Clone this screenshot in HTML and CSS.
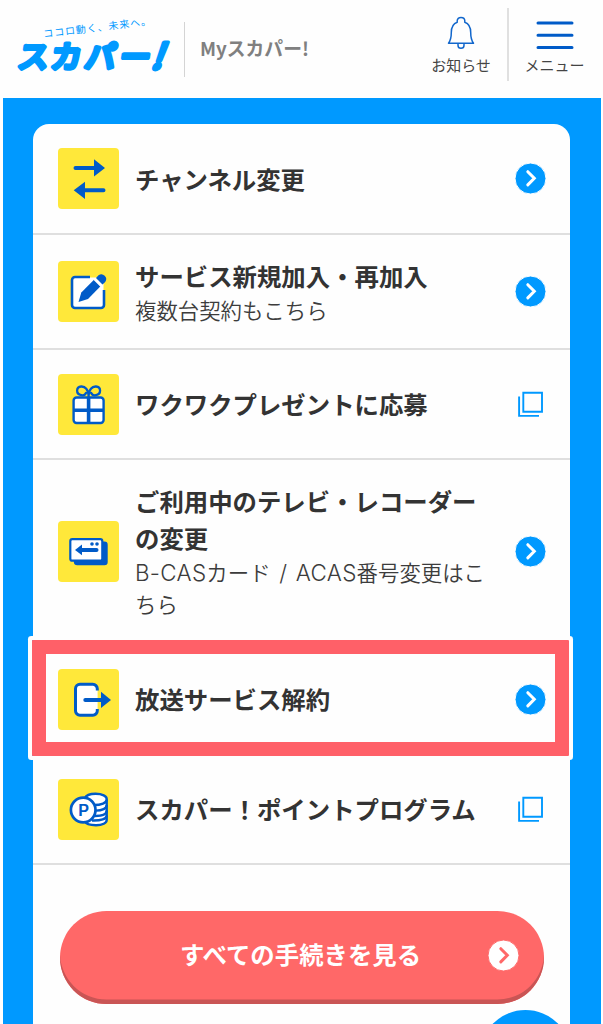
FILE: index.html
```html
<!DOCTYPE html>
<html lang="ja">
<head>
    <meta charset="UTF-8">
    <meta name="viewport" content="width=device-width, initial-scale=1.0">
    <title>Myスカパー!</title>
    <link rel="stylesheet" href="styles.css">
</head>
<body>
    <!-- 共通アイコン -->
    <svg class="defs" width="0" height="0">
        <symbol id="arrow" viewBox="0 0 31 31">
            <circle cx="15.5" cy="15.5" r="15.5" fill="currentColor"/>
            <path class="chevron" d="M12.8 8.7 19.3 15.3 12.8 21.9" fill="none" stroke-width="3" stroke-linecap="round"/>
        </symbol>
        <symbol id="window" viewBox="0 0 26 26">
            <path d="M5.3 1.7H24V20.7H5.3ZM1.1 5.5V24.9H21" fill="none" stroke="#0099ff" stroke-width="1.9"/>
        </symbol>
    </svg>

    <header class="header">
        <svg class="logo" width="184" height="98" viewBox="0 0 184 98">
            <path id="tagline" d="M44 37.5 Q92 32 152 24.5" fill="none"/>
            <text class="tagline"><textPath href="#tagline">ココロ動く、未来へ。</textPath></text>
            <g class="logo-text" transform="translate(0 67.5) skewX(-8)">
                <text x="32 65 99 134">スカパー</text>
            </g>
            <g class="logo-text" transform="translate(156 69) skewX(-20)">
                <text class="logo-mark">!</text>
            </g>
        </svg>
        <div class="site-name">Myスカパー!</div>
        <a class="head-btn news" href="#">
            <svg width="28" height="34" viewBox="0 0 28 34">
                <path d="M1.5 27.3C4.3 23.5 4.3 21 4.3 16.5C4.3 10.5 6.5 7.5 10.2 6.2V5C10.2 2.7 11.8 1.4 14 1.4S17.8 2.7 17.8 5V6.2C21.5 7.5 23.7 10.5 23.7 16.5C23.7 21 23.7 23.5 26.5 27.3ZM11 27.5V29.2C11 31.3 12.3 32.3 14 32.3S17 31.3 17 29.2V27.5" fill="none" stroke="#1267cc" stroke-width="1.5" stroke-linejoin="round"/>
            </svg>
            <span>お知らせ</span>
        </a>
        <a class="head-btn menu" href="#">
            <svg width="38" height="34" viewBox="0 0 38 34">
                <path d="M2 7H36M2 19.2H36M2 31.4H36" stroke="#005bc8" stroke-width="3" stroke-linecap="round"/>
            </svg>
            <span>メニュー</span>
        </a>
    </header>

    <main class="main">
        <div class="card">
            <a class="row" href="#">
                <svg class="icon" viewBox="0 0 61 61">
                    <path d="M17.5 20H38M25 42.2H45.5" stroke="#005bc8" stroke-width="4" stroke-linecap="round"/>
                    <path d="M36 11.2 47 20 36 28.6ZM27 33.8V51L15.7 42.2Z" fill="#005bc8"/>
                </svg>
                <div class="text"><p class="title">チャンネル変更</p></div>
                <svg class="go"><use href="#arrow"/></svg>
            </a>
            <a class="row row-sub" href="#">
                <svg class="icon" viewBox="0 0 61 61">
                    <rect x="14.5" y="16.5" width="31" height="30" rx="2.5" fill="#fff"/>
                    <path d="M32 16H17A3 3 0 0 0 14 19V44A3 3 0 0 0 17 47H43A3 3 0 0 0 46 44V29" fill="none" stroke="#005bc8" stroke-width="2.6"/>
                    <path d="M20.5 41 23.3 31.5 36 18.8 42.5 25.3 30 38Z" fill="#005bc8"/>
                    <path d="M36.3 18 43.5 25.2" stroke="#fff" stroke-width="2.2"/>
                    <path d="M38 17 40.5 14.3A4.8 4.8 0 0 1 47.2 21L44.5 23.5Z" fill="#005bc8"/>
                </svg>
                <div class="text">
                    <p class="title">サービス新規加入・再加入</p>
                    <p class="sub">複数台契約もこちら</p>
                </div>
                <svg class="go"><use href="#arrow"/></svg>
            </a>
            <a class="row row-present" href="#">
                <svg class="icon" viewBox="0 0 61 61">
                    <rect x="15.6" y="23.5" width="30" height="25.5" rx="3" fill="#fff" stroke="#005bc8" stroke-width="2.4"/>
                    <path d="M30.6 23V49M15.6 36.2H45.6" stroke="#005bc8" stroke-width="3.6"/>
                    <path d="M30.6 23C30.5 15 27 12.3 23.2 12.5C18 12.8 17.5 20.2 23.3 21.2C26.5 21.8 27.5 20.2 28 19M30.6 23C30.7 15 34.2 12.3 38 12.5C43.2 12.8 43.7 20.2 37.9 21.2C34.7 21.8 33.7 20.2 33.2 19" fill="none" stroke="#005bc8" stroke-width="2.3" stroke-linecap="round"/>
                </svg>
                <div class="text"><p class="title">ワクワクプレゼントに応募</p></div>
                <svg class="win"><use href="#window"/></svg>
            </a>
            <a class="row row-long" href="#">
                <svg class="icon" viewBox="0 0 61 61">
                    <path d="M44 20.5H46.5A3.2 3.2 0 0 1 49.7 23.7V41A3.2 3.2 0 0 1 46.5 44.2H19.3A3.5 3.5 0 0 1 15.8 41V38Z" fill="#005bc8"/>
                    <rect x="12.3" y="18.2" width="32" height="21.5" rx="2" fill="#fff" stroke="#005bc8" stroke-width="2.2"/>
                    <path d="M22.5 29H38.5" stroke="#005bc8" stroke-width="4" stroke-linecap="round"/>
                    <path d="M24 23.5V34.3L17 29Z" fill="#005bc8"/>
                    <circle cx="34" cy="23" r="1.8" fill="#005bc8"/>
                    <circle cx="39" cy="23" r="1.8" fill="#005bc8"/>
                </svg>
                <div class="text">
                    <p class="title">ご利用中のテレビ・レコーダー<br>の変更</p>
                    <p class="sub"><span class="en">B-CAS</span>カード<span class="en"> / ACAS</span>番号変更はこ<br>ちら</p>
                </div>
                <svg class="go"><use href="#arrow"/></svg>
            </a>
            <a class="row row-cancel" href="#">
                <svg class="icon" viewBox="0 0 61 61">
                    <rect x="17.6" y="15.4" width="22" height="31" rx="4.5" fill="#fff"/>
                    <path d="M39.3 21.5V19.8A4.5 4.5 0 0 0 34.8 15.3H22A4.5 4.5 0 0 0 17.5 19.8V41.7A4.5 4.5 0 0 0 22 46.2H34.8A4.5 4.5 0 0 0 39.3 41.7V40" fill="none" stroke="#005bc8" stroke-width="3"/>
                    <path d="M27.3 31H44" stroke="#005bc8" stroke-width="4" stroke-linecap="round"/>
                    <path d="M43 22.8 53 31 43 39Z" fill="#005bc8"/>
                </svg>
                <div class="text"><p class="title">放送サービス解約</p></div>
                <svg class="go"><use href="#arrow"/></svg>
                <div class="frame"></div>
            </a>
            <a class="row" href="#">
                <svg class="icon" viewBox="0 0 61 61">
                    <g fill="#fff" stroke="#005bc8" stroke-width="2.4">
                        <path d="M26.5 19.5C28 16.5 32 14.8 37.5 14.8C44.5 14.8 48.7 17.2 48.7 20V41C48.7 44 44.5 46.2 38 46.2C32.5 46.2 28 45 26.5 42Z"/>
                        <path d="M48.7 20.5C48.7 24 43 26 36 26M48.7 26C48.7 29.5 44 31.6 38 31.6M48.7 31.5C48.7 35 44 37 37 37M48.7 36.5C48.7 40 43 41.8 34 41.5" fill="none"/>
                        <circle cx="25.2" cy="31" r="12.3" stroke-width="2.7"/>
                    </g>
                    <text class="point" x="20.2" y="36.7">P</text>
                </svg>
                <div class="text"><p class="title">スカパー！ポイントプログラム</p></div>
                <svg class="win"><use href="#window"/></svg>
            </a>
            <a class="all-btn" href="#">
                <span>すべての手続きを見る</span>
                <svg class="go"><use href="#arrow"/></svg>
            </a>
        </div>
    </main>
    <div class="page-top"><a href="#"></a></div>
</body>
</html>
```
FILE: styles.css
```css
* {
    box-sizing: border-box;
}
body {
    margin: 0;
    height: 1024px;
    overflow: hidden;
    position: relative;
    background-color: #fefefe;
    color: #333;
    font-family: "Noto Sans CJK JP", sans-serif;
}
a {
    color: inherit;
    text-decoration: none;
}
p {
    margin: 0;
}
.defs {
    position: absolute;
}

/* ヘッダー */
.header {
    display: flex;
    height: 98px;
}
.logo {
    flex: none;
}
.tagline {
    font-size: 10px;
    letter-spacing: 0.9px;
    fill: #0099ff;
}
.logo-text {
    font-size: 31px;
    font-weight: 500;
    text-anchor: middle;
    fill: #0099ff;
    stroke: #0099ff;
    stroke-width: 4px;
    stroke-linejoin: round;
}
.logo-mark {
    font-size: 35px;
}
.site-name {
    height: 55px;
    margin-top: 22px;
    padding-left: 15px;
    border-left: 1px solid #d4d4d4;
    line-height: 51px;
    font-size: 18.8px;
    font-weight: bold;
    color: #808080;
    white-space: nowrap;
}
.head-btn {
    display: flex;
    flex-direction: column;
    align-items: center;
    font-size: 15px;
    line-height: 20px;
    color: #444;
    white-space: nowrap;
}
.news {
    width: 93px;
    height: 73px;
    margin: 8px 0 0 auto;
    padding: 8px 1px 0 0;
    border-right: 2px solid #e0e0e0;
}
.news span,
.menu span {
    margin-top: 5px;
}
.menu {
    width: 94px;
    padding: 16px 3px 0 0;
}

/* 手続き一覧 */
.main {
    margin: 0 2px 0 3px;
    padding: 26px 31px 0 30px;
    height: 926px;
    background-color: #0099ff;
}
.card {
    height: 900px;
    background-color: #fefefe;
    border-radius: 16px 16px 0 0;
}
.row {
    display: flex;
    align-items: center;
    position: relative;
    height: 110px;
    padding: 0 24px 0 25px;
    border-bottom: 2px solid #dfdfdf;
}
.row:first-child {
    height: 111px;
}
.row-sub {
    height: 115px;
}
.row-long {
    height: 185px;
}
.icon {
    flex: none;
    width: 61px;
    height: 61px;
    background-color: #ffe83a;
    border-radius: 4px;
}
.point {
    font-family: "Liberation Sans", sans-serif;
    font-size: 16px;
    font-weight: bold;
    fill: #005bc8;
}
.text {
    flex: 1;
    padding: 0 0 1px 16px;
    white-space: nowrap;
}
.title {
    font-size: 24.4px;
    font-weight: bold;
    line-height: 37px;
}
.sub {
    font-size: 21.4px;
    font-weight: 350;
    line-height: 32px;
    color: #3c3c3c;
}
.en {
    font-family: Inter, sans-serif;
    font-size: 22.4px;
    line-height: 1;
    letter-spacing: 0.3px;
    word-spacing: 2px;
}
.go {
    flex: none;
    width: 31px;
    height: 31px;
    color: #0099ff;
    stroke: #fff;
}
.go circle {
    stroke: none;
}
.win {
    flex: none;
    width: 26px;
    height: 26px;
    margin-right: 2px;
}
/* 解約の強調枠 */
.frame {
    position: absolute;
    top: -5px;
    left: -1px;
    right: 1px;
    height: 116px;
    border: 14px solid #ff6068;
    box-shadow: 0 0 0 4px #fefefe;
    border-radius: 1px;
}

.all-btn {
    display: flex;
    align-items: center;
    justify-content: center;
    position: relative;
    height: 93px;
    margin: 46px 26px 0 27px;
    padding: 0 3px 8px 0;
    border-radius: 47px;
    background-color: #ff6868;
    box-shadow: inset 0 -4.5px 0 #c95555;
    color: #fff;
    font-size: 24.4px;
    font-weight: bold;
}
.all-btn .go {
    position: absolute;
    top: 29px;
    right: 25px;
    color: #fff;
    stroke: #ff6868;
}
.page-top {
    position: absolute;
    top: 1010px;
    left: 480px;
    width: 91px;
    height: 14px;
    overflow: hidden;
}
.page-top a {
    display: block;
    height: 91px;
    border-radius: 50%;
    background-color: #0099ff;
}
```
